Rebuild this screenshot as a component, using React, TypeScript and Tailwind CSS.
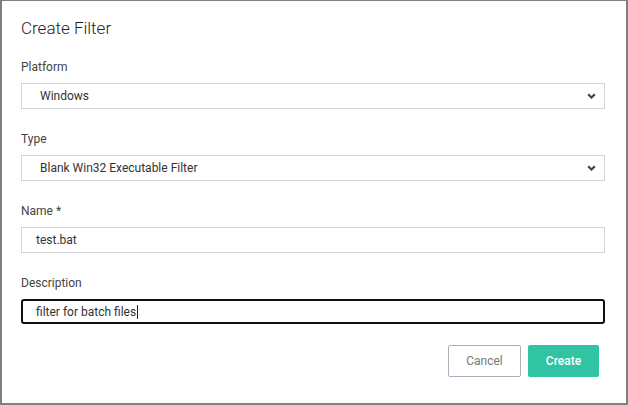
import { FC } from "react";

const Chevron: FC = () => (
  <svg width="9" height="6" viewBox="0 0 9 6" className="mr-px shrink-0">
    <path d="M1.2 1.2 L4.5 4.5 L7.8 1.2" fill="none" stroke="#444" strokeWidth="2.2" />
  </svg>
);

const SelectBox: FC<{ value: string }> = ({ value }) => (
  <div className="flex h-[26px] items-center justify-between border border-[#d4d4d4] bg-white pl-[18px] pr-[7px] text-[12px] text-[#333]">
    <span>{value}</span>
    <Chevron />
  </div>
);

const Field: FC<{ label: string; children: React.ReactNode }> = ({ label, children }) => (
  <div className="flex flex-col">
    {/* label */}
    <div className="mb-[8px] h-4 text-[12px] leading-4 text-[#444]">{label}</div>
    {children}
  </div>
);

const App: FC = () => {
  return (
    <div className="h-[405px] w-[628px] bg-white font-['Roboto','Liberation_Sans',sans-serif]">
      <div className="flex h-full w-full flex-col border-t border-r-2 border-b-2 border-l-2 border-[#808080] pl-[19px] pr-[21px]">
        <h1 className="mt-[15px] h-6 text-[17px] font-light leading-6 text-[#222]">Create Filter</h1>

        <div className="mt-[19px] flex flex-col gap-[22px]">
          <Field label="Platform">
            <SelectBox value="Windows" />
          </Field>
          <Field label="Type">
            <SelectBox value="Blank Win32 Executable Filter" />
          </Field>
          <Field label="Name *">
            <div className="flex h-[26px] items-center border border-[#d4d4d4] pl-[14px] text-[12px] text-[#333]">
              test.bat
            </div>
          </Field>
          <Field label="Description">
            <div className="flex h-[25px] items-center rounded-[3px] border-2 border-[#111] pl-[13px] text-[12px] text-[#333]">
              <span>filter for batch files</span>
              <span className="ml-px h-[14px] w-px bg-[#222]" />
            </div>
          </Field>
        </div>

        {/* actions */}
        <div className="mt-[21px] mr-[6px] flex justify-end gap-[7px]">
          <button className="h-8 w-[73px] rounded-[2px] border border-[#a9b2ba] bg-white text-[12px] text-[#777]">
            Cancel
          </button>
          <button className="h-8 w-[71px] rounded-[2px] bg-[#30c4a2] text-[12px] font-medium text-white">
            Create
          </button>
        </div>
      </div>
    </div>
  );
};

export default App;
